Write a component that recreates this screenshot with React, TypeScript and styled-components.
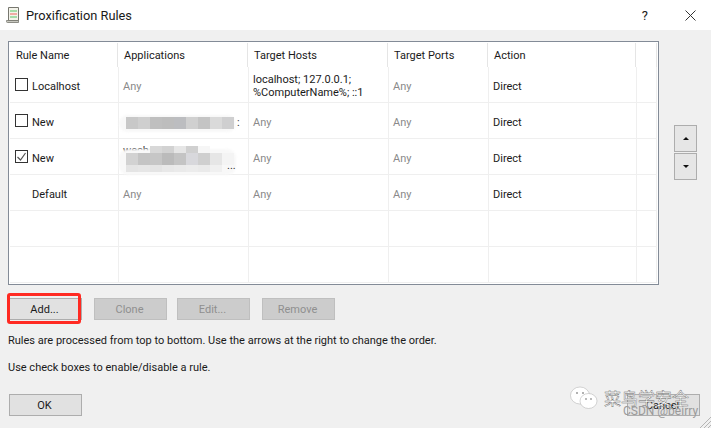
import { createGlobalStyle, styled } from 'styled-components';

const rules = [
  { name: 'Localhost', box: 'off', apps: 'Any', hosts: 'localhost; 127.0.0.1;\n%ComputerName%; ::1', blur: '' },
  { name: 'New', box: 'off', apps: '', hosts: 'Any', blur: 'one' },
  { name: 'New', box: 'on', apps: '', hosts: 'Any', blur: 'two' },
  { name: 'Default', box: 'none', apps: 'Any', hosts: 'Any', blur: '' },
];

const mosaicOne = ['#c8c8c8', '#cfcfcf', '#bfbfbf', '#bdbdbd', '#bcbdc0', '#d0d0d0', '#c4c4c4', '#dadada', '#cfcfd0'];
const mosaicTop = ['#d8d8d8', '#d2d2d2', '#e6e6e6', '#d0d0d0', '#f6f6f6'];
const mosaicMid = ['#d2d2d2', '#c4c4c4', '#c6c6c6', '#bbbbbb', '#c4c4c4', '#d8d8dc', '#cfcfcf', '#e6e6e6', '#f4f4f4'];
const mosaicLow = ['#e4e4e4', '#e6e6e6', '#e4e4e4', '#e8e8e8', '#eaeaea', '#ececec', '#eaeaea', '#f0f0f0'];

const GlobalStyle = createGlobalStyle`
  html, body { margin: 0; padding: 0; background: #f0f0f0; }
  body { font-family: Roboto, "Noto Sans", sans-serif; font-size: 11px; color: #1a1a1a; }
`;

export default function App() {
  return (
    <Dialog>
      <GlobalStyle />
      <TitleBar>
        <svg width="15" height="18" viewBox="0 0 15 18">
          <path d="M2.5 1.5h10v13h-10z" fill="#f3f3ea" stroke="#77776f" />
          <rect x="4" y="4" width="7" height="2" fill="#a5dca8" />
          <rect x="4" y="7" width="7" height="2" fill="#f0aca4" />
          <rect x="4" y="10" width="7" height="2" fill="#a5dca8" />
          <path d="M.5 14.5h12v2h-11a1 1 0 0 1-1-1z" fill="#c8c8c0" stroke="#77776f" strokeWidth="0.8" />
        </svg>
        <Title>Proxification Rules</Title>
        <Help>?</Help>
        <svg width="11" height="11" viewBox="0 0 11 11">
          <path d="M.5.5l10 10M10.5.5l-10 10" stroke="#333" fill="none" />
        </svg>
      </TitleBar>
      <Body>
        <TableRow>
          <Table>
            <Header>
              <HeadCell>Rule Name</HeadCell>
              <HeadCell>Applications</HeadCell>
              <HeadCell>Target Hosts</HeadCell>
              <HeadCell>Target Ports</HeadCell>
              <HeadCell>Action</HeadCell>
              <HeadCell />
            </Header>
            {rules.map((rule, i) => (
              <Row key={i}>
                <NameCell>
                  {rule.box === 'none' ? (
                    <NoBox />
                  ) : (
                    <CheckBox>
                      {rule.box === 'on' && (
                        <svg width="11" height="11" viewBox="0 0 11 11">
                          <path d="M1.5 6l3 3 5-7" stroke="#555" strokeWidth="1.2" fill="none" />
                        </svg>
                      )}
                    </CheckBox>
                  )}
                  {rule.name}
                </NameCell>
                <Cell $muted>
                  {rule.apps}
                  {rule.blur === 'one' && (
                    <>
                      <Blob $top={12} $height={17} />
                      <Mosaic $left={7} $top={14} $height={12}>
                        {mosaicOne.map((shade, t) => <Tile key={t} $shade={shade} />)}
                      </Mosaic>
                      <Tail>:</Tail>
                    </>
                  )}
                  {rule.blur === 'two' && (
                    <>
                      <Partial>wechat</Partial>
                      <Blob $top={10} $height={26} />
                      <Mosaic $left={31} $top={7} $height={7}>
                        {mosaicTop.map((shade, t) => <Tile key={t} $shade={shade} />)}
                      </Mosaic>
                      <Mosaic $left={7} $top={14} $height={12}>
                        {mosaicMid.map((shade, t) => <Tile key={t} $shade={shade} />)}
                      </Mosaic>
                      <Mosaic $left={7} $top={26} $height={7}>
                        {mosaicLow.map((shade, t) => <Tile key={t} $shade={shade} />)}
                      </Mosaic>
                      <TailDots>...</TailDots>
                    </>
                  )}
                </Cell>
                <Cell $muted={rule.hosts === 'Any'}>{rule.hosts}</Cell>
                <Cell $muted>Any</Cell>
                <Cell>Direct</Cell>
                <Cell />
              </Row>
            ))}
            <Row><Cell /><Cell /><Cell /><Cell /><Cell /><Cell /></Row>
            <Row><Cell /><Cell /><Cell /><Cell /><Cell /><Cell /></Row>
          </Table>
          <Arrows>
            <ArrowButton>
              <svg width="6" height="3" viewBox="0 0 6 3"><path d="M3 0l3 3H0z" fill="#111" /></svg>
            </ArrowButton>
            <ArrowButton>
              <svg width="6" height="3" viewBox="0 0 6 3"><path d="M0 0h6L3 3z" fill="#111" /></svg>
            </ArrowButton>
          </Arrows>
        </TableRow>
        <Actions>
          <Button>Add...</Button>
          <Button disabled $left={2}>Clone</Button>
          <Button disabled>Edit...</Button>
          <Button disabled $left={2}>Remove</Button>
          <Highlight />
        </Actions>
        <Note>Rules are processed from top to bottom. Use the arrows at the right to change the order.</Note>
        <Note>Use check boxes to enable/disable a rule.</Note>
        <Footer>
          <Button>OK</Button>
          <Button>Cancel</Button>
        </Footer>
      </Body>
      <Grip width="11" height="13" viewBox="0 0 11 13">
        <path d="M11 2L0 13M11 6L4 13M11 10L8 13" stroke="#b5b5b5" fill="none" />
      </Grip>
      <Watermark>
        <svg width="28" height="24" viewBox="0 0 28 24">
          <ellipse cx="10" cy="9.5" rx="9.5" ry="8.5" fill="#fff" stroke="#aaa" strokeWidth="0.5" />
          <ellipse cx="18.5" cy="15" rx="8.5" ry="7.5" fill="#fff" stroke="#aaa" strokeWidth="0.5" />
          <circle cx="7" cy="7" r="1" fill="#999" />
          <circle cx="13" cy="7" r="1" fill="#999" />
          <circle cx="16" cy="13" r="0.9" fill="#999" />
          <circle cx="21" cy="13" r="0.9" fill="#999" />
        </svg>
        <WatermarkText>菜鸟学安全</WatermarkText>
      </Watermark>
      <Credit>CSDN @beirry</Credit>
    </Dialog>
  );
}

const Dialog = styled.div`
  position: relative;
  width: 711px;
  height: 428px;
  overflow: hidden;
  background: #f0f0f0;
`;

const TitleBar = styled.div`
  display: flex;
  align-items: center;
  height: 30px;
  padding: 0 15px 0 6px;
  background: #fff;
`;

const Title = styled.div`
  flex: 1;
  margin-left: 5px;
  font-size: 12.8px;
`;

const Help = styled.div`
  margin-right: 37px;
  font-size: 13px;
`;

const Body = styled.div`
  padding: 11px 0 0 8px;
`;

const TableRow = styled.div`
  display: flex;
  gap: 15px;
  align-items: flex-end;
`;

const Table = styled.div`
  width: 651px;
  height: 244px;
  box-sizing: border-box;
  padding: 1px;
  background: #fff;
  border: 1px solid #838b97;
`;

const Header = styled.div`
  display: grid;
  grid-template-columns: 108px 130px 140px 100px 148px 1fr;
  height: 24px;
`;

const HeadCell = styled.div`
  display: flex;
  align-items: center;
  padding-left: 6px;
  box-sizing: border-box;
  border-right: 1px solid #e5e5e5;
`;

const Row = styled.div`
  display: grid;
  grid-template-columns: 109px 130px 140px 100px 148px 1fr;
  height: 36px;
  border-bottom: 1px solid #efefef;
  box-sizing: border-box;
`;

const Cell = styled.div<{ $muted?: boolean }>`
  position: relative;
  display: flex;
  align-items: center;
  padding: 3px 0 0 4px;
  line-height: 13px;
  white-space: pre-line;
  color: ${({ $muted }) => ($muted ? '#8a8a8a' : '#1a1a1a')};
  border-right: 1px solid #efefef;
`;

const NameCell = styled(Cell)`
  gap: 4px;
  padding-left: 5px;
`;

const CheckBox = styled.span`
  display: flex;
  align-items: center;
  justify-content: center;
  width: 11px;
  height: 11px;
  margin-top: -3px;
  border: 1px solid #333;
`;

const NoBox = styled.span`
  width: 13px;
`;

const Blob = styled.div<{ $top: number; $height: number }>`
  position: absolute;
  left: 0;
  top: ${({ $top }) => $top}px;
  width: 117px;
  height: ${({ $height }) => $height}px;
  background: #f8f8f8;
  border-radius: 9px;
  filter: blur(1px);
`;

const Mosaic = styled.div<{ $left: number; $top: number; $height: number }>`
  position: absolute;
  left: ${({ $left }) => $left}px;
  top: ${({ $top }) => $top}px;
  display: flex;
  height: ${({ $height }) => $height}px;
`;

const Tile = styled.span<{ $shade: string }>`
  width: 12px;
  background: ${({ $shade }) => $shade};
`;

const Tail = styled.span`
  position: absolute;
  left: 118px;
  top: 13px;
  color: #333;
`;

const Partial = styled.span`
  position: absolute;
  left: 4px;
  top: 5px;
  color: #333;
`;

const TailDots = styled.span`
  position: absolute;
  left: 108px;
  top: 20px;
  color: #333;
`;

const Arrows = styled.div`
  display: flex;
  flex-direction: column;
  gap: 1px;
  margin-bottom: 105px;
`;

const ArrowButton = styled.div`
  display: flex;
  align-items: center;
  justify-content: center;
  width: 23px;
  height: 27px;
  box-sizing: border-box;
  background: #e6e6e6;
  border: 1px solid #adadad;
`;

const Actions = styled.div`
  position: relative;
  display: flex;
  gap: 10px;
  margin: 13px 0 14px 1px;
`;

const Highlight = styled.div`
  position: absolute;
  left: -2px;
  top: -5px;
  width: 68px;
  height: 25px;
  border: 3px solid #ff2a22;
  border-radius: 3px;
`;

const Button = styled.button<{ $left?: number }>`
  width: 73px;
  height: 22px;
  margin-left: ${({ $left }) => $left ?? 0}px;
  padding: 0 2px 0 0;
  font: inherit;
  color: #1a1a1a;
  background: #e1e1e1;
  border: 1px solid #adadad;

  &:disabled {
    color: #8f8f8f;
    background: #cccccc;
    border-color: #bfbfbf;
  }
`;

const Note = styled.div`
  margin-top: 12px;
  height: 15px;
`;

const Footer = styled.div`
  display: flex;
  justify-content: space-between;
  width: 691px;
  margin: 18px 0 0 1px;
`;

const Grip = styled.svg`
  position: absolute;
  right: 0;
  bottom: 0;
`;

const Watermark = styled.div`
  position: absolute;
  left: 570px;
  top: 385px;
  display: flex;
  align-items: center;
  gap: 6px;
`;

const WatermarkText = styled.div`
  font-family: "Noto Sans CJK SC", sans-serif;
  font-size: 17px;
  color: #fff;
  -webkit-text-stroke: 0.4px #666;
`;

const Credit = styled.div`
  position: absolute;
  left: 623px;
  top: 404px;
  font-size: 12px;
  color: #9a9a9a;
`;
